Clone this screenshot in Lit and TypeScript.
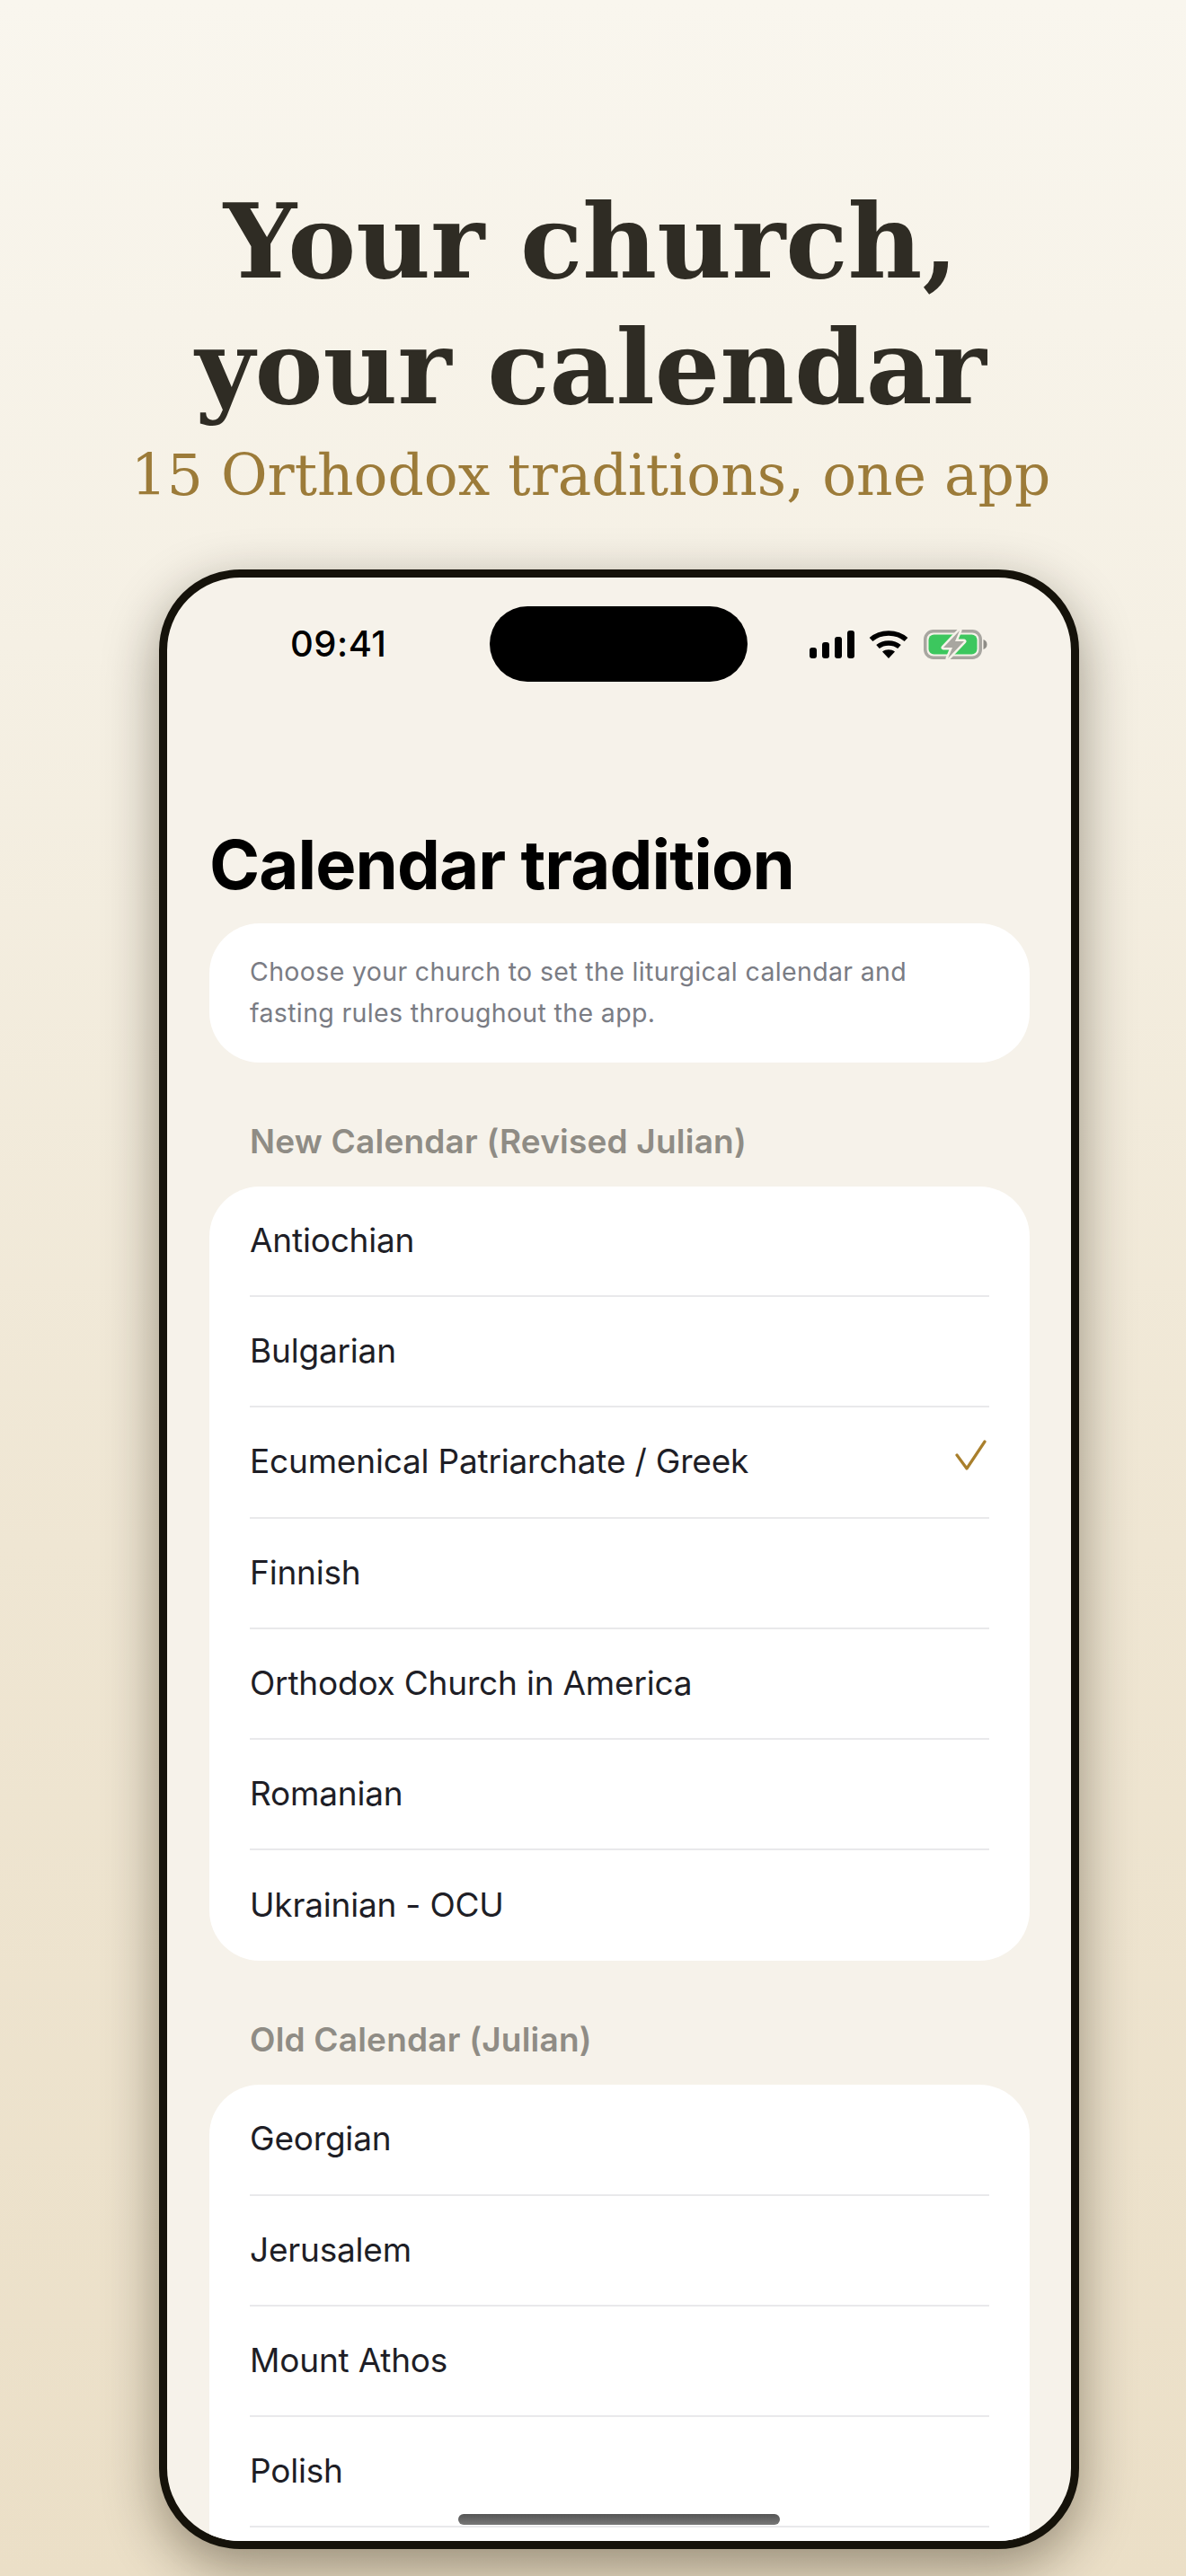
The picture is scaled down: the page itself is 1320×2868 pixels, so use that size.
import { LitElement, html, css, svg } from "lit";
import { customElement } from "lit/decorators.js";

const NEW_CAL = ["Antiochian", "Bulgarian", "Ecumenical Patriarchate / Greek", "Finnish", "Orthodox Church in America", "Romanian", "Ukrainian - OCU"];
const OLD_CAL = ["Georgian", "Jerusalem", "Mount Athos", "Polish"];
const SELECTED = "Ecumenical Patriarchate / Greek";

@customElement("app-root")
export class AppRoot extends LitElement {
  static styles = css`
    :host { display: block; width: 1320px; height: 2868px; overflow: hidden;
      background: linear-gradient(180deg, #f9f6ee 0%, #f5f0e4 25%, #efe6d3 60%, #ebdfc7 100%);
      font-family: Inter, "Noto Sans", sans-serif; }
    .hero { display: flex; flex-direction: column; align-items: center; padding-top: 199px; width: 1315px; font-family: "DejaVu Serif", serif; }
    h1 { margin: 0; font-size: 114px; line-height: 140px; font-weight: 700; color: #2f2c24; text-align: center; }
    .sub { font-size: 63px; line-height: 82px; color: #9c7b39; margin-top: 10px; }
    .phone { box-sizing: border-box; margin: 63px 0 0 177px; width: 1024px; height: 2204px; border: 9px solid #15120a; border-radius: 90px;
      background: #f6f2ea; overflow: hidden; position: relative; box-shadow: 0 20px 60px rgba(30, 22, 5, 0.42); }
    .status { display: flex; align-items: center; height: 84px; margin-top: 32px; padding-left: 137px; }
    .time { width: 222px; font-size: 40px; font-weight: 500; color: #000; line-height: 84px; letter-spacing: 0.5px; }
    .island { width: 287px; height: 84px; border-radius: 42px; background: #000; }
    .icons { display: flex; align-items: center; gap: 16px; margin-left: 69px; }
    .content { padding: 0 46px 0 47px; }
    .title { margin: 157px 0 0; font-size: 76px; line-height: 92px; font-weight: 700; color: #000; letter-spacing: -0.9px; }
    .info { box-sizing: border-box; margin-top: 20px; height: 155px; border-radius: 56px; background: #fff; padding: 31px 45px; font-size: 28.5px; line-height: 46px; color: #7a7c84; letter-spacing: 0.35px; }
    .section { margin: 65px 0 0; padding: 0 45px; font-size: 37px; font-weight: 600; line-height: 46px; color: #8f8c85; letter-spacing: 0.2px; }
    .card { margin-top: 27px; background: #fff; border-radius: 56px; padding: 0 45px; overflow: hidden; }
    .row { box-sizing: border-box; height: 123.2px; display: flex; align-items: center; justify-content: space-between; font-size: 37px; color: #1e1e26; border-bottom: 2.5px solid #e9e9eb; padding-bottom: 2px; letter-spacing: -0.2px; }
    .row:last-child { border-bottom: none; }
    .open { padding-bottom: 60px; }
    .open .row:last-child { border-bottom: 2.5px solid #e9e9eb; }
    .check { width: 40px; height: 40px; margin-right: 0; margin-top: -8px; }
    .home { position: absolute; left: 324px; top: 2156px; width: 358px; height: 12px; border-radius: 6px; background: linear-gradient(180deg, #555, #777); }
  `;

  private row(name: string) {
    return html`<div class="row"><span>${name}</span>${name === SELECTED
      ? html`<svg class="check" viewBox="0 0 40 40">${svg`<path d="M4 17 L15 32 L35 2" fill="none" stroke="#a97f2c" stroke-width="3.2" stroke-linecap="round" stroke-linejoin="round"/>`}</svg>`
      : ""}</div>`;
  }

  render() {
    return html`
      <div class="hero">
        <h1>Your church,<br />your calendar</h1>
        <div class="sub">15 Orthodox traditions, one app</div>
      </div>
      <div class="phone">
        <div class="status">
          <div class="time">09:41</div>
          <div class="island"></div>
          <div class="icons">
            <svg width="50" height="31" viewBox="0 0 50 31">
              <rect x="0" y="19" width="8" height="12" rx="3"/><rect x="14" y="13" width="8" height="18" rx="3"/>
              <rect x="28" y="7" width="8" height="24" rx="3"/><rect x="42" y="0" width="8" height="31" rx="3"/>
            </svg>
            <svg width="44" height="32" viewBox="0 0 44 32">
              <path d="M2.5 11 C13 1.5 31 1.5 41.5 11" fill="none" stroke="#000" stroke-width="5.5"/>
              <path d="M10 19 C16.5 13.5 27.5 13.5 34 19" fill="none" stroke="#000" stroke-width="5.5"/>
              <path d="M15 24.5 C19 21.5 25 21.5 29 24.5 L22 32 Z"/>
            </svg>
            <svg width="71" height="33" viewBox="0 0 71 33" style="margin-left:1px">
              <rect x="1.75" y="1.75" width="61.5" height="29.5" rx="9" fill="none" stroke="#a8a6a0" stroke-width="3.5"/>
              <rect x="5.5" y="5.5" width="54" height="22" rx="6" fill="#3cc75e"/>
              <path d="M66.5 11 C69.5 12 70.5 14 70.5 16.5 C70.5 19 69.5 21 66.5 22 Z" fill="#8e8c86"/>
              <path d="M40 1 L22 20 H32 L27 32 L45 13 H35 Z" fill="#a8a6a0" stroke="#f6f2ea" stroke-width="5" stroke-linejoin="round" paint-order="stroke"/>
            </svg>
          </div>
        </div>
        <div class="content">
          <h2 class="title">Calendar tradition</h2>
          <div class="info">Choose your church to set the liturgical calendar and<br />fasting rules throughout the app.</div>
          <div class="section">New Calendar (Revised Julian)</div>
          <div class="card">${NEW_CAL.map((n) => this.row(n))}</div>
          <div class="section">Old Calendar (Julian)</div>
          <div class="card open">${OLD_CAL.map((n) => this.row(n))}</div>
        </div>
        <div class="home"></div>
      </div>
    `;
  }
}
